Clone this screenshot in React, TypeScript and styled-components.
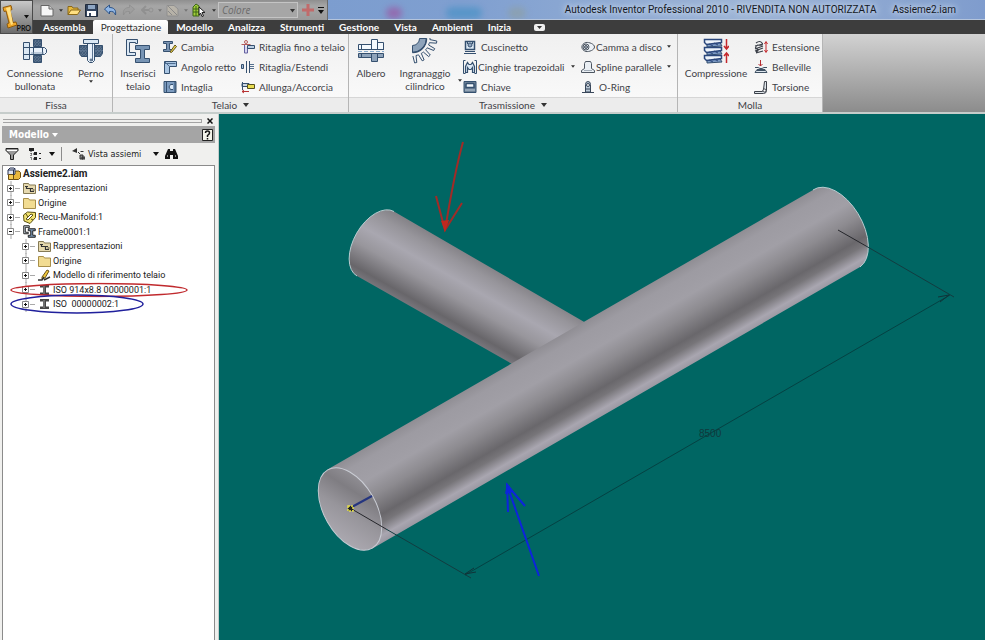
import React from "react";
import styled, { createGlobalStyle } from "styled-components";

const uiFont = `Lato, "Open Sans", sans-serif`;
const treeFont = `Roboto, "Open Sans", sans-serif`;

const GlobalStyle = createGlobalStyle`
  *, *::before, *::after { box-sizing: border-box; }
  html, body, #root { height: 100%; }
  body { margin: 0; overflow: hidden; background: #006663; font-family: ${uiFont}; font-size: 10px; color: #3f4248; }
  button, select { font: inherit; color: inherit; border: 0; background: none; padding: 0; margin: 0; }
  svg { display: block; flex: none; }
`;

const Shell = styled.div`
  display: flex;
  flex-direction: column;
  height: 100%;
`;

/* ---------- title bar and tabs ---------- */

const Header = styled.header`
  display: grid;
  grid-template-columns: 33px minmax(0, 1fr);
  grid-template-rows: 20px 14px;
  background: #3d3d3d;
`;

const AppButton = styled.button`
  grid-row: 1 / 3;
  display: flex;
  align-items: center;
  gap: 3px;
  position: relative;
  border: 1px solid #4a4a4a;
  background: linear-gradient(#c9c9c9, #9a9a9a 50%, #6c6c6c);
`;

const ProTag = styled.span`
  position: absolute;
  right: 1px;
  bottom: 0;
  font-size: 7px;
  line-height: 9px;
  font-weight: 700;
  color: #111;
`;

const TitleRow = styled.div`
  display: flex;
  min-width: 0;
  background: linear-gradient(90deg, #7699cd, #7f9fd0 45%, #9db4d6 75%, #7f9ccd);
`;

const QuickBar = styled.div`
  display: flex;
  align-items: center;
  flex: none;
  padding: 0 1px 0 5px;
  background: linear-gradient(#8f8f8f, #a6a6a6 30%, #9a9a9a);
  border-right: 1px solid #6a6a6a;
`;

const QuickButton = styled.button<{ $w: number; $dim?: boolean }>`
  width: ${(p) => p.$w}px;
  height: 18px;
  display: flex;
  align-items: center;
  justify-content: space-between;
  padding: 0 2px;
  opacity: ${(p) => (p.$dim ? 0.4 : 1)};
`;

const ColorSelect = styled.select`
  appearance: none;
  width: 80px;
  height: 16px;
  padding: 0 3px;
  border: 1px solid #c4c4c4;
  background: #a6a6a6;
  color: #6b6b6b;
  font-family: "Open Sans", sans-serif;
  font-style: italic;
  line-height: 13px;
`;

const SelectWrap = styled.label`
  position: relative;
  display: flex;
  margin-right: 2px;
  svg { position: absolute; right: 3px; top: 7px; pointer-events: none; }
`;

const TitleArea = styled.div`
  position: relative;
  flex: 1;
  min-width: 0;
  display: flex;
  justify-content: flex-end;
  align-items: center;
  gap: 16px;
  padding-right: 29px;
  border-bottom: 1px solid #b4c4dc;
  overflow: hidden;
`;

const Blob = styled.i<{ $x: number; $w: number; $c: string }>`
  position: absolute;
  left: ${(p) => p.$x}px;
  bottom: 0;
  width: ${(p) => p.$w}px;
  height: 12px;
  border-radius: 6px;
  background: ${(p) => p.$c};
  filter: blur(3px);
  opacity: 0.6;
`;

const TitleText = styled.span`
  position: relative;
  font-family: Roboto, sans-serif;
  font-size: 10px;
  line-height: 18px;
  white-space: nowrap;
  color: #14181f;
  text-shadow: 0 0 5px #d5e0f0, 0 0 8px #d5e0f0;
`;

const Tabs = styled.nav`
  display: flex;
  align-items: stretch;
  padding-left: 2px;
`;

const Tab = styled.button<{ $on?: boolean }>`
  padding: 0 7px 0 8px;
  line-height: 14px;
  white-space: nowrap;
  font-weight: ${(p) => (p.$on ? 400 : 700)};
  color: ${(p) => (p.$on ? "#333" : "#fff")};
  background: ${(p) => (p.$on ? "linear-gradient(#fff, #f1f1f1)" : "none")};
  border-radius: 2px 2px 0 0;
`;

const TabExtra = styled.button`
  display: flex;
  align-items: center;
  padding: 0 16px;
`;

/* ---------- ribbon ---------- */

const Ribbon = styled.section`
  display: flex;
  height: 80px;
  flex: none;
  background: linear-gradient(#d2d2d2, #8c8c8c);
  border-bottom: 2px solid #c6cdcb;
`;

const Group = styled.section`
  display: flex;
  flex-direction: column;
  border-right: 1px solid #b5b5b5;
  background: linear-gradient(#f0f0f0, #fbfbfb);
`;

const GroupBody = styled.div<{ $cols: string }>`
  flex: 1;
  display: grid;
  grid-template-columns: ${(p) => p.$cols};
  padding-top: 3px;
`;

const GroupFooter = styled.footer`
  display: flex;
  justify-content: center;
  align-items: center;
  gap: 6px;
  height: 15px;
  border-top: 1px solid #d6d6d6;
  background: #ececec;
`;

const BigButton = styled.button`
  display: flex;
  flex-direction: column;
  align-items: center;
  justify-content: flex-start;
  line-height: 13px;
  white-space: nowrap;
  padding-top: 1px;
  > span { margin-top: 3px; }
`;

const BigArrow = styled.button`
  display: flex;
  align-items: center;
  justify-content: center;
  padding-top: 26px;
`;

const Stack = styled.div`
  display: flex;
  flex-direction: column;
  gap: 1px;
`;

const SmallButton = styled.button<{ $tight?: boolean }>`
  display: flex;
  align-items: center;
  height: 19px;
  gap: ${(p) => (p.$tight ? 1 : 4)}px;
  white-space: nowrap;
  text-align: left;
`;

const Push = styled.span`
  margin-left: auto;
  padding-right: 6px;
`;

/* ---------- browser panel ---------- */

const Body = styled.main`
  flex: 1;
  min-height: 0;
  display: grid;
  grid-template-columns: 219px minmax(0, 1fr);
`;

const Browser = styled.aside`
  display: flex;
  flex-direction: column;
  padding: 1px 3px 0 2px;
  background: #f0f0ee;
  font-family: ${treeFont};
  border-right: 1px solid #c4cdcb;
`;

const Grip = styled.div`
  display: flex;
  align-items: center;
  justify-content: space-between;
  height: 11px;
  padding-left: 1px;
`;

const GripBar = styled.span`
  flex: 1;
  height: 4px;
  margin-right: 3px;
  border: solid #a4a4a4;
  border-width: 1px 1px 1px 0;
`;

const CloseButton = styled.button`
  display: flex;
  padding: 2px;
`;

const PanelTitle = styled.div`
  display: flex;
  align-items: center;
  justify-content: space-between;
  height: 17px;
  padding: 0 2px 0 7px;
  background: #a5a5a5;
  color: #fff;
`;

const TitleDrop = styled.button`
  display: flex;
  align-items: center;
  gap: 3px;
  font-weight: 700;
  font-size: 10px;
  font-family: "DejaVu Sans Condensed", "DejaVu Sans", sans-serif;
`;

const PanelTools = styled.div`
  display: flex;
  align-items: center;
  height: 22px;
  padding-left: 3px;
  color: #222;
`;

const ToolButton = styled.button<{ $w?: number }>`
  display: flex;
  align-items: center;
  justify-content: space-between;
  width: ${(p) => (p.$w ? `${p.$w}px` : "auto")};
  margin-right: 6px;
  font-family: "DejaVu Sans Condensed", "DejaVu Sans", sans-serif;
  font-size: 9px;
  white-space: nowrap;
`;

const ToolText = styled.span`
  flex: 1;
  padding-left: 3px;
  text-align: left;
`;

const Divider = styled.span`
  width: 1px;
  height: 14px;
  margin-right: 10px;
  background: #8c8c8c;
`;

const Tree = styled.ul`
  flex: 1;
  list-style: none;
  margin: 0;
  padding: 0 0 0 4px;
  display: grid;
  grid-template-rows: repeat(5, 15px 14px);
  align-content: start;
  border: 1px solid #8b8b8b;
  border-bottom: 0;
  background: #fff;
  color: #222;
`;

const TreeRow = styled.li<{ $depth: number; $bold?: boolean }>`
  position: relative;
  display: flex;
  align-items: center;
  gap: 2px;
  padding-left: ${(p) => p.$depth * 15}px;
  font-weight: ${(p) => (p.$bold ? 700 : 400)};
  font-size: ${(p) => (p.$bold ? 10 : 9)}px;
  white-space: pre;
`;

const Toggle = styled.button`
  display: flex;
  width: 14px;
`;

const Marker = styled.svg`
  position: absolute;
  left: 3px;
  top: 50%;
  transform: translateY(-50%);
  pointer-events: none;
`;

const Viewport = styled.section`
  min-width: 0;
  overflow: hidden;
  background: #006663;
  > svg { width: 100%; height: 100%; }
`;

/* ---------- icons ---------- */

const Caret = ({ w = 6, c = "#333" }: { w?: number; c?: string }) => (
  <svg width={w} height={w / 2 + 1} viewBox="0 0 6 4"><path d="M0 0h6L3 4z" fill={c} /></svg>
);

const navy = "#35506f";
const steel = "#8ea3ba";
const pale = "#dbe8f4";

const Big = ({ children }: { children: React.ReactNode }) => (
  <svg width="26" height="26" viewBox="0 0 26 26" fill="none" stroke={navy} strokeWidth="1">{children}</svg>
);
const Small = ({ children }: { children: React.ReactNode }) => (
  <svg width="14" height="14" viewBox="0 0 14 14" fill="none" stroke={navy} strokeWidth="1">{children}</svg>
);

const Hatch = () => (
  <defs>
    <pattern id="hatch" width="3" height="3" patternUnits="userSpaceOnUse">
      <rect width="3" height="3" fill="#8195ab" />
      <path d="M0 3L3 0" stroke="#405a78" strokeWidth="1" />
    </pattern>
  </defs>
);

const BoltIcon = () => (
  <Big>
    <Hatch />
    <path d="M11.500 1.500h8v7h-8zM11.500 17.500h8v7h-8z" fill="url(#hatch)" />
    <path d="M7.500 9.500h15l2 2v3l-2 2h-15z" fill="#e9f1fa" />
    <path d="M1.500 4.500h6v17h-6z" fill={pale} />
    <path d="M1.500 9.500h6M1.500 16.500h6M11.500 9v8M20.500 10v6" />
    <path d="M9 15h13" stroke={steel} />
  </Big>
);

const PinIcon = () => (
  <Big>
    <path d="M1.500 7.500h8v11h-6l-2-3zM16.500 7.500h8v8l-2 3h-6z" fill="url(#hatch)" />
    <path d="M9.500 5.500h7v17l-2 2h-3l-2-2z" fill="#e9f1fa" />
    <path d="M5.500 1.500h15v4h-15z" fill={pale} />
    <path d="M1 12.500h8M17 12.500h8M14.500 6v17" stroke="#5b7390" />
    <circle cx="13" cy="22" r="1" fill="#fff" />
  </Big>
);

const FrameIcon = ({ size = 26 }: { size?: number }) => (
  <svg width={size} height={size} viewBox="0 0 26 26" fill="none" stroke={size < 20 ? "#222" : navy} strokeWidth={size < 20 ? 2 : 1}>
    <path d="M1.500 1.500h11v4h-2v-1h-6v10h6v3h-9z" fill={pale} />
    <path d="M10.500 7.500h14v4h-5v9h5v4h-14v-4h5v-9h-5z" fill="#7794b4" />
  </svg>
);

const ShaftIcon = () => (
  <Big>
    <path d="M.5 6.500h13v-5h6v3h6v7H.5z" fill="#f4f9fd" />
    <path d="M.5 15.500h25v4h-6v4h-6v-4H.5z" fill={steel} />
    <path d="M0 11.500h26M3.500 6v5M13.500 2v9M19.500 3v8M3.500 16v3M13.500 16v7M19.500 16v7" />
    <path d="M0 13.500h26" stroke="#86aacb" strokeDasharray="4 2" />
  </Big>
);

const gearTeeth = Array.from({ length: 5 }, (_, i) => {
  const at = (r: number, deg: number) => {
    const a = (deg * Math.PI) / 180;
    return `${(r * Math.cos(a)).toFixed(1)} ${(r * Math.sin(a)).toFixed(1)}`;
  };
  const d = i * 18;
  return `${i ? "L" : "M"}${at(18, d)}L${at(18, d + 5)}L${at(25, d + 7)}L${at(25, d + 12)}L${at(18, d + 15)}`;
}).join("");

const GearIcon = () => (
  <Big>
    <path d="M7.500.5A7 7 0 0 1 .5 7.500v7A14 14 0 0 0 14.500.5z" fill={steel} />
    <path d="M.5 14.500A14 14 0 0 0 14.500.5" strokeWidth="1.500" />
    <path d={gearTeeth} fill="none" />
  </Big>
);

const SpringIcon = () => (
  <Big>
    {[1, 9, 17].map((y) => (
      <g key={y}>
        <path d={`M4 ${y + 4}l12-2 3 5-15 1z`} fill="#7e9cc6" />
        <path d={`M1.500 ${y}.500h17v3l-15 2-2-2z`} fill="#eef4fb" stroke="#2b477c" strokeWidth="1.500" />
        <path d={`M6 ${y + 5}l4 2M11 ${y + 4}l4 2`} stroke="#2b477c" />
      </g>
    ))}
    <path d="M23.500 1v10M21 8l2.500 3L26 8M23.500 25V15M21 18l2.500-3 2.500 3" stroke="#c4282d" strokeWidth="1.500" />
  </Big>
);

const ChangeIcon = () => (
  <Small>
    <path d="M.5 1.500h9v2h-3v6h3v2h-9v-2h3v-6h-3z" fill="#7892b0" />
    <path d="M7 12l5-7 1.500 1.500-5 6z" fill="#f2d84c" stroke="#5d5220" />
  </Small>
);
const MiterIcon = () => (
  <Small>
    <path d="M1.500 1.500h12v5h-7v7h-5z" fill="#a9c5e2" />
    <path d="M1.500 1.500l5 5M1.500 3.500h11" stroke="#4d6c90" />
  </Small>
);
const NotchIcon = () => (
  <Small>
    <path d="M1 1.500h12v11H1z" fill="#7d9cc0" />
    <path d="M10 4.500H7.500q-3 2.500 0 5H10" fill="#dceaf7" />
    <path d="M3.500 2v10M12 2v10" />
  </Small>
);
const TrimIcon = () => (
  <Small>
    <path d="M3.500 5v8h3V8" stroke="#6461a0" fill="#d8d7f0" />
    <path d="M6.500 5.500h7v3h-7z" fill="#bcd0e4" />
    <path d="M.5 4.500h9" stroke="#b65c59" />
    <circle cx="5" cy="2" r="1.500" stroke="#b65c59" />
  </Small>
);
const ExtendIcon = () => (
  <Small>
    <path d="M.5 4.500h2v4h-2zM5.500 1v12M8.500 1v12" fill="#a4bdd8" />
    <path d="M9 4.500h4M9 8.500h4M9 6.500h4" stroke="#54708f" />
  </Small>
);
const LengthenIcon = () => (
  <Small>
    <path d="M1.500 2v8M1 3.500h7v3H1z" fill="#ccd7e2" />
    <path d="M6.500 4.500h7v4h-7z" fill="#e8dc50" stroke="#55501e" />
    <path d="M8 11.500H1M3 10l-2 1.500L3 13" stroke="#b83333" />
  </Small>
);
const BearingIcon = () => (
  <Small>
    <path d="M2.500 1.500h9v8h-9z" fill={pale} strokeWidth="1.500" />
    <circle cx="7" cy="5" r="2" fill="#8fa6bf" />
    <path d="M2 11.500h10M1 13.500h12M4.500 2v2M9.500 2v2" />
  </Small>
);
const BeltIcon = () => (
  <Small>
    <path d="M2.500.5h-2v13h2M11.500.5h2v13h-2" />
    <path d="M2.500 12.500v-6l2-4 1.500 2h2l1.500-2 2 4v6h-2v-5l-1.500 2h-2l-1.500-2v5z" fill={pale} strokeWidth="1.200" />
  </Small>
);
const KeyIcon = () => (
  <Small>
    <path d="M1 1.500h12v11H1z" fill="#6f8297" />
    <path d="M3 4.500q0-1 1-1h6q1 0 1 1v3H3z" fill="#f2f7fb" strokeWidth="1.500" />
    <path d="M2 10h10" stroke="#b6c6d5" />
  </Small>
);
const CamIcon = () => (
  <Small>
    <path d="M5 2.500C8 2 13.500 4 13.500 7S8 12 5 11.500C-.5 10-.5 4 5 2.500z" fill="#edf2f7" stroke="#4c5560" />
    <circle cx="5" cy="7" r="3" stroke="#4c5560" />
    <circle cx="5" cy="7" r="1.500" fill="#9aa7b5" stroke="#4c5560" />
  </Small>
);
const SplineIcon = () => (
  <Small>
    <path d="M.5 12.500v-2l3-2v-5l1-2h5l1 2v5l3 2v2z" fill="#e9eef3" stroke="#4c5560" />
    <path d="M3 10.500h8" stroke="#a3adb8" />
  </Small>
);
const RingIcon = () => (
  <Small>
    <path d="M4.500 12V4.500q0-3 2.500-3t2.500 3V12z" fill="#b9c8d6" stroke="#39475a" />
    <circle cx="7" cy="5" r="1.500" fill="#fff" stroke="#39475a" />
    <path d="M1 12.500h12M5 9h4" stroke="#39475a" />
  </Small>
);
const ExtSpringIcon = () => (
  <Small>
    <path d="M2 3q4-3 6 0t-5 2M1 6l8-2M1 9l8-3M1 11l8-3M2 13l7-2M3 6q-3 2 0 3t-1 3" stroke="#3a3f48" strokeWidth="1.200" />
    <path d="M12 2v10M10.500 4L12 1.500 13.500 4M10.500 10l1.500 2.500 1.500-2.500" stroke="#c4282d" />
  </Small>
);
const BellevilleIcon = () => (
  <Small>
    <path d="M1 7.500h3l2 1h2l2-1h3M1 12.500h12l-2-3H3zM3 10.500h8" stroke="#3f5163" fill="#dde6ee" />
    <path d="M6.500 0v6M4.500 4l2 2 2-2" stroke="#b52d31" />
  </Small>
);
const TorsionIcon = () => (
  <Small>
    <path d="M.5 11.500h8l1-2 1-8h2v9q0 3-3 3H.5z" fill="#dfe5ea" stroke="#3a3f48" />
    <circle cx="10.500" cy="10.500" r="1.500" fill="#fff" stroke="#3a3f48" />
  </Small>
);

const NewIcon = () => (
  <svg width="14" height="13" viewBox="0 0 14 13"><path d="M1 1.500h8l4 3.500v7H1z" fill="#f6f6f6" stroke="#666" /><path d="M9 1.500V5h4" fill="#ccc" stroke="#666" /></svg>
);
const OpenIcon = () => (
  <svg width="14" height="12" viewBox="0 0 14 12"><path d="M1 10.500v-8h4l1 1.500h5v2" fill="#e5b93f" stroke="#8a6818" /><path d="M1 10.500L4 6h9.500l-3 4.500z" fill="#ffe082" stroke="#8a6818" /></svg>
);
const SaveIcon = () => (
  <svg width="13" height="13" viewBox="0 0 13 13"><path d="M.5.500h12v12H.5z" fill="#33445e" stroke="#202b3c" /><path d="M3 1h7v4H3z" fill="#8ea6c4" /><path d="M2 7h9v5H2z" fill="#fff" /><path d="M4 9h2v3H4z" fill="#33445e" /></svg>
);
const UndoIcon = ({ flip }: { flip?: boolean }) => (
  <svg width="13" height="12" viewBox="0 0 13 12"><path transform={flip ? "translate(13 0) scale(-1 1)" : undefined} d="M.5 5l5-4v2.500c4 0 7 2 6 7.500-1-3-3-4-6-3.500V10z" fill={flip ? "#999" : "#8fb6e6"} stroke={flip ? "#777" : "#2c5285"} /></svg>
);
const ReturnIcon = () => (
  <svg width="13" height="10" viewBox="0 0 13 10"><path d="M5 1L1 5l4 4M1 5h7" fill="none" stroke="#777" strokeWidth="2" /><circle cx="10" cy="5" r="2" fill="none" stroke="#777" /></svg>
);
const UpdateIcon = () => (
  <svg width="13" height="13" viewBox="0 0 13 13"><path d="M1 1.500h7l4 3.500v7H1z" fill="#d8cdb4" stroke="#777" /><path d="M2 2l9 9M2 7l4 4" fill="none" stroke="#666" /></svg>
);
const SelectIcon = () => (
  <svg width="14" height="14" viewBox="0 0 14 14"><path d="M1 4l3-3 3 2v10H1z" fill="#a3cf3a" stroke="#3c6417" /><path d="M1 6h6M1 9h6M4 3v10" stroke="#3c6417" /><path d="M7 4l6 5.500h-3l1.500 3.500-1.500.5-1.500-3.500L7 12z" fill="#fff" stroke="#222" /></svg>
);
const LogoIcon = () => (
  <svg width="20" height="26" viewBox="0 0 20 26">
    <path d="M2 3.500l8-2 1 4-2 1 3 12 3-.5 1 3-9 3-1-4 2-1L5 7l-2 .5z" fill="#f0a828" stroke="#8e5a0d" />
    <path d="M5 4l4-1 3 17-2 1z" fill="#ffdf83" />
  </svg>
);

const FolderIcon = ({ mark }: { mark?: boolean }) => (
  <svg width="13" height="12" viewBox="0 0 13 12">
    <path d="M.5 11.500v-10h5l1 1.500h6v8.500z" fill={mark ? "#e6d9ae" : "#f2dc92"} stroke={mark ? "#857a55" : "#a88f4a"} />
    {mark && <path d="M2 4.500h3M3.500 4.500v2h4v3M7 6.500h3M7 9.500h4M9.500 8h2" fill="none" stroke="#333" strokeWidth="1.200" />}
  </svg>
);
const AssemblyIcon = () => (
  <svg width="14" height="13" viewBox="0 0 14 13">
    <path d="M6.500 6l2-2H12l1.500 1.500v5l-2 2h-5z" fill="#e9b73c" stroke="#6c4e10" />
    <path d="M1 3l2-2h4l1 1v5L6.500 8H1z" fill="#dde3f0" stroke="#27314f" />
    <path d="M1.500 7.500h5v5h-5z" fill="#f5cb57" stroke="#6c4e10" />
    <path d="M1 3h5.500v5M6.500 3L8 1.500" fill="none" stroke="#27314f" />
  </svg>
);
const PartIcon = () => (
  <svg width="13" height="13" viewBox="0 0 13 13"><path d="M.5 4l4-3 8 .5v5l-5.500 6L1 10z" fill="#f1e170" stroke="#5a5013" /><path d="M3 8l5-5 2 1-5 5z" fill="#fff" stroke="#5a5013" /><path d="M3 3l2 3M8 8l2 1" stroke="#5a5013" fill="none" /></svg>
);
const PencilIcon = () => (
  <svg width="13" height="12" viewBox="0 0 13 12"><path d="M4 8l5-7 2 1-4 7-3 1z" fill="#f1c93b" stroke="#6b531a" /><path d="M0 11h4l2-3M6 11l6-3" stroke="#333" strokeWidth="1.500" fill="none" /></svg>
);
const BeamIcon = () => (
  <svg width="13" height="12" viewBox="0 0 13 12"><path d="M2 1h9v2.500H8v5h3V11H2V8.500h3v-5H2z" fill="#444" /><path d="M6 2v8" stroke="#999" /></svg>
);
const ToggleIcon = ({ open }: { open?: boolean }) => (
  <svg width="13" height="15" viewBox="0 0 13 15">
    <path d="M4 0v15M8 7.500h5" stroke="#a9a9a9" />
    <path d="M.5 4.500h6v6h-6z" fill="#fff" stroke="#888" />
    <path d={open ? "M2 7.500h3" : "M2 7.500h3M3.500 6v3"} stroke="#111" />
  </svg>
);

/* ---------- data ---------- */

type Cmd = { label: string; icon: React.ReactNode; drop?: boolean; tight?: boolean };

const frameA: Cmd[] = [
  { label: "Cambia", icon: <ChangeIcon /> },
  { label: "Angolo retto", icon: <MiterIcon /> },
  { label: "Intaglia", icon: <NotchIcon /> },
];
const frameB: Cmd[] = [
  { label: "Ritaglia fino a telaio", icon: <TrimIcon /> },
  { label: "Ritaglia/Estendi", icon: <ExtendIcon /> },
  { label: "Allunga/Accorcia", icon: <LengthenIcon /> },
];
const driveA: Cmd[] = [
  { label: "Cuscinetto", icon: <BearingIcon /> },
  { label: "Cinghie trapezoidali", icon: <BeltIcon />, drop: true, tight: true },
  { label: "Chiave", icon: <KeyIcon /> },
];
const driveB: Cmd[] = [
  { label: "Camma a disco", icon: <CamIcon />, drop: true, tight: true },
  { label: "Spline parallele", icon: <SplineIcon />, drop: true, tight: true },
  { label: "O-Ring", icon: <RingIcon /> },
];
const springs: Cmd[] = [
  { label: "Estensione", icon: <ExtSpringIcon /> },
  { label: "Belleville", icon: <BellevilleIcon /> },
  { label: "Torsione", icon: <TorsionIcon /> },
];

const Commands = ({ items }: { items: Cmd[] }) => (
  <Stack>
    {items.map((c) => (
      <SmallButton key={c.label} $tight={c.tight}>
        {c.icon}
        {c.label}
        {c.drop && <Push><Caret w={4} /></Push>}
      </SmallButton>
    ))}
  </Stack>
);

type Node = { label: string; icon: React.ReactNode; depth: number; open?: boolean; mark?: { c: string; w: number; h: number } };

const nodes: Node[] = [
  { label: "Rappresentazioni", icon: <FolderIcon mark />, depth: 0 },
  { label: "Origine", icon: <FolderIcon />, depth: 0 },
  { label: "Recu-Manifold:1", icon: <PartIcon />, depth: 0 },
  { label: "Frame0001:1", icon: <FrameIcon size={13} />, depth: 0, open: true },
  { label: "Rappresentazioni", icon: <FolderIcon mark />, depth: 1 },
  { label: "Origine", icon: <FolderIcon />, depth: 1 },
  { label: "Modello di riferimento telaio", icon: <PencilIcon />, depth: 1 },
  { label: "ISO 914x8.8 00000001:1", icon: <BeamIcon />, depth: 1, mark: { c: "#c02a2e", w: 178, h: 15 } },
  { label: "ISO  00000002:1", icon: <BeamIcon />, depth: 1, mark: { c: "#20209c", w: 134, h: 20 } },
];

const tabsAfter = ["Modello", "Analizza", "Strumenti", "Gestione", "Vista", "Ambienti", "Inizia"];

/* ---------- model drawing ---------- */

const Model = () => (
  <svg viewBox="219 114 766 526" preserveAspectRatio="xMinYMin slice" role="img" aria-label="Modello 3D del telaio">
    <defs>
      <linearGradient id="mainPipe" gradientUnits="userSpaceOnUse" x1="327" y1="469" x2="373" y2="549">
        <stop offset="0" stopColor="#8f8d93" />
        <stop offset=".12" stopColor="#9d9ba2" />
        <stop offset=".32" stopColor="#a19fa6" />
        <stop offset=".5" stopColor="#8d8b90" />
        <stop offset=".72" stopColor="#69676b" />
        <stop offset=".8" stopColor="#777579" />
        <stop offset=".92" stopColor="#a9a6b0" />
        <stop offset="1" stopColor="#9896a0" />
      </linearGradient>
      <linearGradient id="sidePipe" gradientUnits="userSpaceOnUse" x1="393" y1="212" x2="357" y2="276">
        <stop offset="0" stopColor="#858388" />
        <stop offset=".15" stopColor="#97959b" />
        <stop offset=".38" stopColor="#a9a7b0" />
        <stop offset=".6" stopColor="#98969c" />
        <stop offset=".9" stopColor="#68666a" />
        <stop offset="1" stopColor="#77757b" />
      </linearGradient>
      <linearGradient id="bore" gradientUnits="userSpaceOnUse" x1="328" y1="474" x2="366" y2="546">
        <stop offset="0" stopColor="#9b999f" />
        <stop offset=".3" stopColor="#7f7d82" />
        <stop offset=".55" stopColor="#97959b" />
        <stop offset="1" stopColor="#b1aeb6" />
      </linearGradient>
    </defs>
    <path d="M394 211.500L586 323L512 364L357 276A37 21.500 -60 0 1 394 211.500z" fill="url(#sidePipe)" />
    <path d="M357 276A37 21.500 -60 0 1 394 211.500" fill="none" stroke="#b8ccd0" />
    <path d="M327.500 469.500L813 190A45 26 60.300 0 1 860 267L372.500 548.500z" fill="url(#mainPipe)" />
    <path d="M813 190A45 26 60.300 0 1 860 267" fill="none" stroke="#b8ccd0" />
    <ellipse cx="350" cy="509" rx="45" ry="26" transform="rotate(60.300 350 509)" fill="url(#bore)" stroke="#c9ccd4" />
    <path d="M350 508l22-12" stroke="#25357f" strokeWidth="2" />
    <path d="M350 508L386 529M838 230L866 246" stroke="#25262b" />
    <path d="M386 529L471 578M866 246L954 297" stroke="#123c40" />
    <path d="M465 575L950 295" stroke="#063b3d" opacity=".85" />
    <path d="M465 574l9-6M465 574l11-2M949 295l-11 2M949 295l-9 7" fill="none" stroke="#103338" />
    <path d="M348 506h5v5h-5z" fill="#222" stroke="#e6df4b" strokeWidth="1.500" strokeDasharray="2 1" />
    <text x="699" y="437" fill="#10393c" fontFamily="Liberation Sans, sans-serif" fontSize="10">8500</text>
    <path d="M463 142Q455 170 445 230M436 196L445 230L462 203" fill="none" stroke="#a12b27" strokeWidth="2" />
    <path d="M441 221l8-1-4 12z" fill="#c02820" />
    <path d="M539 576L507 485M508 512L507 485L525 506" fill="none" stroke="#0d24dc" strokeWidth="2" />
    <path d="M505 494l2-11 7 9z" fill="#0d24dc" />
  </svg>
);

export default function App() {
  return (
    <Shell>
      <GlobalStyle />
      <Header>
        <AppButton aria-label="Menu applicazione">
          <LogoIcon />
          <Caret w={5} c="#111" />
          <ProTag>PRO</ProTag>
        </AppButton>
        <TitleRow>
          <QuickBar>
            <QuickButton $w={27} aria-label="Nuovo"><NewIcon /><Caret w={4} /></QuickButton>
            <QuickButton $w={18} aria-label="Apri"><OpenIcon /></QuickButton>
            <QuickButton $w={19} aria-label="Salva"><SaveIcon /></QuickButton>
            <QuickButton $w={18} aria-label="Annulla"><UndoIcon /></QuickButton>
            <QuickButton $w={19} $dim aria-label="Ripeti"><UndoIcon flip /></QuickButton>
            <QuickButton $w={25} $dim aria-label="Ritorna"><ReturnIcon /><Caret w={4} /></QuickButton>
            <QuickButton $w={26} $dim aria-label="Aggiorna"><UpdateIcon /><Caret w={4} /></QuickButton>
            <QuickButton $w={28} aria-label="Seleziona"><SelectIcon /><Caret w={4} /></QuickButton>
            <SelectWrap>
              <ColorSelect aria-label="Colore" defaultValue="Colore"><option>Colore</option></ColorSelect>
              <Caret w={5} />
            </SelectWrap>
            <QuickButton $w={16} aria-label="Aggiungi">
              <svg width="12" height="12" viewBox="0 0 12 12"><path d="M6 0v12M0 6h12" stroke="#c16b6b" strokeWidth="3" /></svg>
            </QuickButton>
            <QuickButton $w={10} aria-label="Personalizza">
              <svg width="6" height="7" viewBox="0 0 6 7"><path d="M0 0h6v1H0zM0 3h6L3 7z" fill="#111" /></svg>
            </QuickButton>
          </QuickBar>
          <TitleArea>
            <Blob $x={58} $w={16} $c="#a04b9b" />
            <Blob $x={118} $w={36} $c="#3f8fc4" />
            <Blob $x={180} $w={18} $c="#8f9f9f" />
            <TitleText>Autodesk Inventor Professional 2010 - RIVENDITA NON AUTORIZZATA</TitleText>
            <TitleText>Assieme2.iam</TitleText>
          </TitleArea>
        </TitleRow>
        <Tabs>
          <Tab>Assembla</Tab>
          <Tab $on>Progettazione</Tab>
          {tabsAfter.map((t) => <Tab key={t}>{t}</Tab>)}
          <TabExtra aria-label="Riduci barra multifunzione">
            <svg width="11" height="7" viewBox="0 0 11 7"><rect width="11" height="7" rx="2" fill="#eee" /><path d="M3 2h5L5.500 5z" fill="#333" /></svg>
          </TabExtra>
        </Tabs>
      </Header>

      <Ribbon>
        <Group>
          <GroupBody $cols="70px 42px">
            <BigButton><BoltIcon /><span>Connessione<br />bullonata</span></BigButton>
            <BigButton><PinIcon /><span>Perno</span><Caret w={4} /></BigButton>
          </GroupBody>
          <GroupFooter>Fissa</GroupFooter>
        </Group>
        <Group>
          <GroupBody $cols="50px 78px 107px">
            <BigButton><FrameIcon /><span>Inserisci<br />telaio</span></BigButton>
            <Commands items={frameA} />
            <Commands items={frameB} />
          </GroupBody>
          <GroupFooter>Telaio <Caret /></GroupFooter>
        </Group>
        <Group>
          <GroupBody $cols="44px 64px 6px 118px 96px">
            <BigButton><ShaftIcon /><span>Albero</span></BigButton>
            <BigButton><GearIcon /><span>Ingranaggio<br />cilindrico</span></BigButton>
            <BigArrow aria-label="Altri ingranaggi"><Caret w={4} /></BigArrow>
            <Commands items={driveA} />
            <Commands items={driveB} />
          </GroupBody>
          <GroupFooter>Trasmissione <Caret /></GroupFooter>
        </Group>
        <Group>
          <GroupBody $cols="76px 68px">
            <BigButton><SpringIcon /><span>Compressione</span></BigButton>
            <Commands items={springs} />
          </GroupBody>
          <GroupFooter>Molla</GroupFooter>
        </Group>
      </Ribbon>

      <Body>
        <Browser>
          <Grip>
            <GripBar />
            <CloseButton aria-label="Chiudi">
              <svg width="6" height="6" viewBox="0 0 6 6"><path d="M.5.500l5 5M5.500.500l-5 5" stroke="#111" strokeWidth="1.500" /></svg>
            </CloseButton>
          </Grip>
          <PanelTitle>
            <TitleDrop>Modello <Caret c="#fff" /></TitleDrop>
            <button aria-label="Guida">
              <svg width="11" height="12" viewBox="0 0 11 12"><path d="M.5.500h10v11H.5z" fill="#f3f3ea" stroke="#222" /><path d="M3.500 4q0-2 2-2t2 2q0 1-2 2.500V8M5.500 9v1.500" fill="none" stroke="#111" strokeWidth="1.500" /></svg>
            </button>
          </PanelTitle>
          <PanelTools>
            <ToolButton $w={17} aria-label="Filtro">
              <svg width="14" height="12" viewBox="0 0 14 12"><path d="M1 .5h12v2L8.500 7v4.500h-3V7L1 2.500z" fill="#999" stroke="#222" /><path d="M2 2.500h10" stroke="#fff" /></svg>
            </ToolButton>
            <ToolButton $w={27} aria-label="Struttura">
              <svg width="13" height="13" viewBox="0 0 13 13"><path d="M3 1v10M3 6h4M3 11h4" stroke="#222" strokeDasharray="1 1" /><path d="M1 0h5v3H1zM6 4h3v3H6zM6 9h3v3H6zM11 5h2v1h-2zM11 10h2v1h-2z" fill="#222" /></svg>
              <Caret c="#111" />
            </ToolButton>
            <Divider />
            <ToolButton $w={87}>
              <svg width="13" height="12" viewBox="0 0 13 12"><path d="M0 3l5-3v5z" fill="#333" /><path d="M6 4l2 2M8.500 3.500h3M8 7h3v4H8zM10 9h3v2h-3z" stroke="#333" fill="#888" /></svg>
              <ToolText>Vista assiemi</ToolText>
              <Caret c="#111" />
            </ToolButton>
            <ToolButton aria-label="Trova">
              <svg width="13" height="12" viewBox="0 0 13 12"><path d="M3 1h2v2h3V1h2l3 7v3H8V7H5v4H0V8z" fill="#111" /><path d="M2 8h1M10 8h1" stroke="#fff" /></svg>
            </ToolButton>
          </PanelTools>
          <Tree>
            <TreeRow $depth={0} $bold><AssemblyIcon />Assieme2.iam</TreeRow>
            {nodes.map((n, i) => (
              <TreeRow key={i} $depth={n.depth}>
                <Toggle aria-label={n.open ? "Comprimi" : "Espandi"}><ToggleIcon open={n.open} /></Toggle>
                {n.icon}
                {n.label}
                {n.mark && (
                  <Marker width={n.mark.w} height={n.mark.h} viewBox={`0 0 ${n.mark.w} ${n.mark.h}`}>
                    <ellipse cx={n.mark.w / 2} cy={n.mark.h / 2} rx={n.mark.w / 2 - 1} ry={n.mark.h / 2 - 1} fill="none" stroke={n.mark.c} strokeWidth="1.500" />
                  </Marker>
                )}
              </TreeRow>
            ))}
          </Tree>
        </Browser>
        <Viewport><Model /></Viewport>
      </Body>
    </Shell>
  );
}
